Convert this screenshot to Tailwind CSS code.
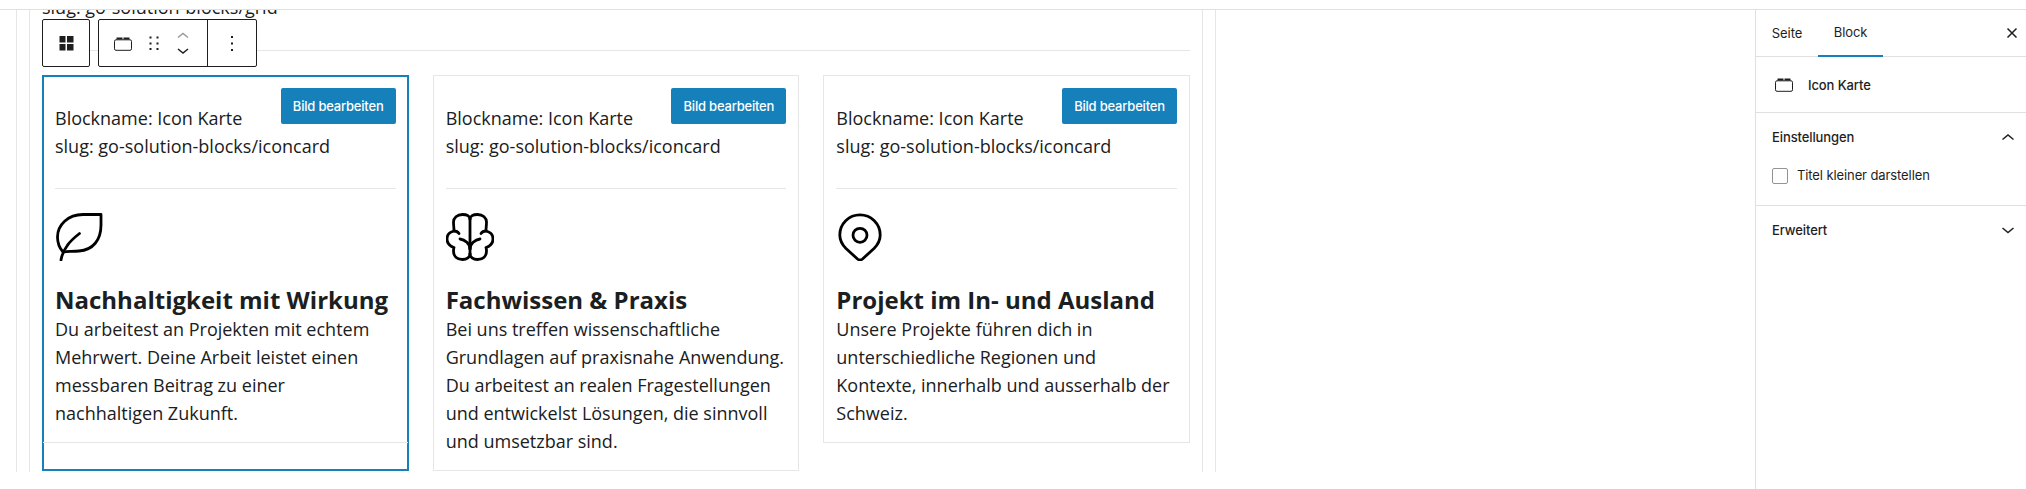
<!DOCTYPE html>
<html lang="de">
  <head>
    <meta charset="UTF-8" />
    <meta name="viewport" content="width=device-width, initial-scale=1.0" />
    <title>Icon Karte</title>
    <script src="https://cdn.jsdelivr.net/npm/@tailwindcss/browser@4"></script>
  </head>
  <body class="bg-white">
    <div class="flex h-[489px] w-[2026px] flex-col overflow-hidden">
      <!-- obere Leiste -->
      <div class="h-[10px] shrink-0 border-b border-[#e0e0e0] bg-white"></div>

      <div class="flex min-h-0 flex-1">
        <!-- Editor -->
        <main class="relative w-[1755px] shrink-0 overflow-hidden font-['Open_Sans',sans-serif] text-[18px] leading-[28px] text-[#1a2021]">
          <div class="ml-[16px] h-full w-[1200px] border-x border-[#e6e6e6]">
            <div class="ml-[12px] h-full w-[1174px] border-x border-[#e6e6e6] px-[12px]">
              <p class="-mt-[17px]">slug: go-solution-blocks/grid</p>
              <div class="mt-[29px] mb-[24px] h-px bg-[#e6e6e6]"></div>

              <div class="grid grid-cols-3 items-start gap-6">
                <!-- Karte 1 (ausgewählt) -->
                <div class="relative self-stretch border border-[#1580ba] ring-1 ring-inset ring-[#1580ba]">
                  <button class="absolute top-[12px] right-[12px] h-9 w-[115px] rounded-[2px] bg-[#1580ba] font-['Inter',sans-serif] text-[13px] font-medium tracking-[-0.2px] text-white">Bild bearbeiten</button>
                  <div class="border-b border-[#e6e6e6] px-3 pt-[28px] pb-[15px]">
                    <p>Blockname: Icon Karte</p>
                    <p>slug: go-solution-blocks/iconcard</p>
                    <div class="mt-[28px] mb-[24px] h-px bg-[#e6e6e6]"></div>
                    <svg class="block h-12 w-12" viewBox="0 0 48 48" fill="none" stroke="#000" stroke-width="2.8" stroke-linecap="round" stroke-linejoin="round">
                      <path d="M46 1.5H28C13 1.5 2.5 12 2.5 24c0 6 2 11 5.500 15 4-.5 10-.5 16-1 14-1 22-11 22-26z" />
                      <path d="M6 47c1-6 3-10 6-14 3-5 8-9 12.500-12.500" />
                    </svg>
                    <h3 class="mt-[24px] text-[24px] leading-[30px] font-bold">Nachhaltigkeit mit Wirkung</h3>
                    <p>Du arbeitest an Projekten mit echtem Mehrwert. Deine Arbeit leistet einen messbaren Beitrag zu einer nachhaltigen Zukunft.</p>
                  </div>
                </div>

                <!-- Karte 2 -->
                <div class="relative border border-[#e6e6e6]">
                  <button class="absolute top-[12px] right-[12px] h-9 w-[115px] rounded-[2px] bg-[#1580ba] font-['Inter',sans-serif] text-[13px] font-medium tracking-[-0.2px] text-white">Bild bearbeiten</button>
                  <div class="px-3 pt-[28px] pb-[15px]">
                    <p>Blockname: Icon Karte</p>
                    <p>slug: go-solution-blocks/iconcard</p>
                    <div class="mt-[28px] mb-[24px] h-px bg-[#e6e6e6]"></div>
                    <svg class="block h-12 w-12" viewBox="0 0 48 48" fill="none" stroke="#000" stroke-width="2.8" stroke-linecap="round" stroke-linejoin="round">
                      <path d="M24 41V6" />
                      <path d="M24 6c0-3-3-4.500-7.500-4.500C11 1.500 7.500 5 7.500 9c0 3 .5 6 .5 9-4.500 1-7 4-7 8s2.500 7 7 8.500c-.5 1-.5 2.500-.5 3.500 0 5 3.500 8.500 9 8.500 4.500 0 7.500-2.500 7.500-5.500" />
                      <path d="M8 18c2 0 4 1 5 2.500M24 36c0-5-5-9.500-10-10" />
                      <g transform="matrix(-1 0 0 1 48 0)">
                        <path d="M24 6c0-3-3-4.500-7.500-4.500C11 1.500 7.500 5 7.500 9c0 3 .5 6 .5 9-4.500 1-7 4-7 8s2.500 7 7 8.500c-.5 1-.5 2.500-.5 3.500 0 5 3.500 8.500 9 8.500 4.500 0 7.500-2.500 7.500-5.500" />
                        <path d="M8 18c2 0 4 1 5 2.500M24 36c0-5-5-9.500-10-10" />
                      </g>
                    </svg>
                    <h3 class="mt-[24px] text-[24px] leading-[30px] font-bold">Fachwissen &amp; Praxis</h3>
                    <p>Bei uns treffen wissenschaftliche Grundlagen auf praxisnahe Anwendung. Du arbeitest an realen Fragestellungen und entwickelst Lösungen, die sinnvoll und umsetzbar sind.</p>
                  </div>
                </div>

                <!-- Karte 3 -->
                <div class="relative border border-[#e6e6e6]">
                  <button class="absolute top-[12px] right-[12px] h-9 w-[115px] rounded-[2px] bg-[#1580ba] font-['Inter',sans-serif] text-[13px] font-medium tracking-[-0.2px] text-white">Bild bearbeiten</button>
                  <div class="px-3 pt-[28px] pb-[15px]">
                    <p>Blockname: Icon Karte</p>
                    <p>slug: go-solution-blocks/iconcard</p>
                    <div class="mt-[28px] mb-[24px] h-px bg-[#e6e6e6]"></div>
                    <svg class="block h-12 w-12" viewBox="0 0 48 48" fill="none" stroke="#000" stroke-width="2.800" stroke-linecap="round" stroke-linejoin="round">
                      <path d="M24 1.800C12.800 1.800 3.800 10.800 3.800 22c0 6 2.700 10 6.200 13.500L21.500 46q2.500 2 5 0L38 35.500c3.500-3.500 6.200-7.500 6.200-13.500 0-11.200-9-20.200-20.200-20.200z" />
                      <circle cx="24" cy="22.300" r="7" />
                    </svg>
                    <h3 class="mt-[24px] text-[24px] leading-[30px] font-bold">Projekt im In- und Ausland</h3>
                    <p>Unsere Projekte führen dich in unterschiedliche Regionen und Kontexte, innerhalb und ausserhalb der Schweiz.</p>
                  </div>
                </div>
              </div>
            </div>
          </div>

          <!-- Block-Toolbar -->
          <div class="absolute top-[9px] left-[42px] flex gap-2 text-[#1e1e1e]">
            <div class="flex h-12 w-12 items-center justify-center rounded-[2px] border border-[#1e1e1e] bg-white">
              <svg class="h-[15px] w-[15px]" viewBox="0 0 15 15" fill="#1e1e1e"><rect x="0.500" width="6" height="6.500" /><rect x="8" width="6.500" height="6.500" /><rect x="0.500" y="8" width="6" height="6.500" /><rect x="8" y="8" width="6.500" height="6.500" /></svg>
            </div>
            <div class="flex h-12 w-[159px] rounded-[2px] border border-[#1e1e1e] bg-white">
              <div class="flex w-[109px] items-center border-r border-[#1e1e1e] pl-[15px]">
                <svg class="h-[15px] w-[18px]" viewBox="0 0 18 15" fill="none">
                  <rect x="0.500" y="3.800" width="17" height="10.500" rx="1.500" stroke="#1e1e1e" />
                  <path d="M2.500 3.500V1.500h6v2zM9.500 3.500V1.500h6v2z" fill="#1e1e1e" />
                </svg>
                <svg class="ml-[17px] h-[14px] w-[10px]" viewBox="0 0 10 14" fill="#1e1e1e"><rect x="0.500" y="0.500" width="2" height="2" /><rect x="7.500" y="0.500" width="2" height="2" /><rect x="0.500" y="6.500" width="2" height="2" /><rect x="7.500" y="6.500" width="2" height="2" /><rect x="0.500" y="12" width="2" height="2" /><rect x="7.500" y="12" width="2" height="2" /></svg>
                <svg class="ml-[18px] h-[26px] w-[12px]" viewBox="0 0 12 26" fill="none" stroke-width="1.500">
                  <path d="M1 7.500l5-4 5 4" stroke="#9a9a9a" />
                  <path d="M1 19l5 4 5-4" stroke="#1e1e1e" />
                </svg>
              </div>
              <div class="flex flex-1 items-center justify-center">
                <svg class="h-[15px] w-[2px]" viewBox="0 0 2 15" fill="#1e1e1e"><rect width="2" height="2" /><rect y="6.500" width="2" height="2" /><rect y="13" width="2" height="2" /></svg>
              </div>
            </div>
          </div>
        </main>

        <!-- Seitenleiste -->
        <aside class="min-w-0 flex-1 border-l border-[#e0e0e0] font-['Inter',sans-serif] text-[13px] tracking-[-0.1px] text-[#1e1e1e]">
          <div class="flex h-[47px] items-stretch border-b border-[#e0e0e0] pr-[2px]">
            <div class="flex w-[62px] items-center justify-center pt-px">Seite</div>
            <div class="-mb-px flex w-[65px] items-center justify-center border-b-2 border-[#1580ba] pt-px">Block</div>
            <svg class="my-auto ml-auto h-6 w-6" viewBox="0 0 24 24" fill="none" stroke="#1e1e1e" stroke-width="1.500"><path d="M7.500 7.500l9 9M16.500 7.500l-9 9" /></svg>
          </div>
          <div class="flex h-[56px] items-center border-b border-[#e0e0e0] pl-[19px] font-medium">
            <svg class="h-[15px] w-[18px]" viewBox="0 0 18 15" fill="none">
              <rect x="0.500" y="3.800" width="17" height="10.500" rx="1.500" stroke="#1e1e1e" />
              <path d="M2.500 3.500V1.500h6v2zM9.500 3.500V1.500h6v2z" fill="#1e1e1e" />
            </svg>
            <span class="ml-[15px] pt-[2px]">Icon Karte</span>
          </div>
          <div class="h-[93px] border-b border-[#e0e0e0] px-4">
            <div class="flex h-[48px] items-center justify-between font-medium">
              <span class="pt-[2px]">Einstellungen</span>
              <svg class="-mr-[10px] h-6 w-6" viewBox="0 0 24 24" fill="none" stroke="#1e1e1e" stroke-width="1.500"><path d="M6.500 14.500l5.500-4.500 5.500 4.500" /></svg>
            </div>
            <label class="mt-[5px] flex items-center gap-[9px]">
              <span class="h-4 w-4 rounded-[2px] border border-[#949494] bg-white"></span>
              <span>Titel kleiner darstellen</span>
            </label>
          </div>
          <div class="flex h-[48px] items-center justify-between px-4 font-medium">
            <span class="pt-[2px]">Erweitert</span>
            <svg class="-mr-[10px] h-6 w-6" viewBox="0 0 24 24" fill="none" stroke="#1e1e1e" stroke-width="1.500"><path d="M6.500 10l5.500 4.500 5.500-4.500" /></svg>
          </div>
        </aside>
      </div>
    </div>
  </body>
</html>
